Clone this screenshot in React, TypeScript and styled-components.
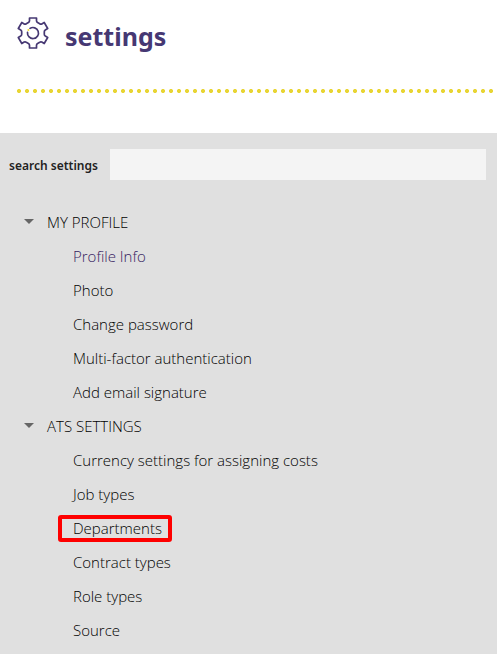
import React from "react";
import styled, { createGlobalStyle } from "styled-components";

const GlobalStyle = createGlobalStyle`
  * { box-sizing: border-box; }
  body { margin: 0; background: #fff; font-family: "Open Sans", sans-serif; color: #222; }
`;

const Page = styled.div`
  display: flex;
  flex-direction: column;
  min-height: 100vh;
`;

const Header = styled.header`
  padding: 16px 0 40px 17px;
`;

const TitleRow = styled.div`
  display: flex;
  align-items: center;
  gap: 16px;
  height: 40px;
`;

const Gear = styled.svg`
  display: block;
  width: 32px;
  height: 34px;
  margin-bottom: 6px;
  flex: none;
`;

const Title = styled.h1`
  margin: 0;
  color: #463873;
  font: 700 25px/40px "Noto Sans", sans-serif;
`;

const DottedRule = styled.div`
  height: 4px;
  margin-top: 33px;
  background: radial-gradient(circle at 2px 2px, #e8d534 1.6px, transparent 2.4px) 0 0 / 8px 4px repeat-x;
`;

const Panel = styled.main`
  flex: 1;
  padding: 16px 11px 0 9px;
  background: #e0e0e0;
`;

const SearchRow = styled.div`
  display: flex;
  align-items: center;
  gap: 12px;
`;

const SearchLabel = styled.label`
  flex: none;
  padding-top: 2px;
  font: 600 12px/16px "Noto Sans", sans-serif;
`;

const SearchInput = styled.input`
  flex: 1;
  min-width: 0;
  height: 31px;
  padding: 0 8px;
  border: 0;
  border-radius: 0;
  background: #f4f4f4;
  font: 14px "Open Sans", sans-serif;
`;

const Menu = styled.nav`
  padding: 25px 0 0 15px;
`;

const GroupButton = styled.button`
  display: flex;
  align-items: center;
  gap: 12px;
  height: 34px;
  padding: 0;
  border: 0;
  background: none;
  color: #000;
  font: 300 15px/34px "Open Sans", sans-serif;
  cursor: pointer;
`;

const Arrow = styled.svg`
  width: 11px;
  height: 6px;
  fill: #666;
`;

const Items = styled.ul`
  margin: 0;
  padding: 0 0 0 34px;
  list-style: none;
`;

const Item = styled.li`
  display: flex;
  align-items: center;
  height: 34px;
`;

const ItemLink = styled.a<{ $current?: boolean; $marked?: boolean }>`
  padding: 0 6px 1px 11px;
  border: 4px solid ${(p) => (p.$marked ? "#fe0000" : "transparent")};
  border-radius: 3px;
  color: ${(p) => (p.$current ? "#35225f" : "#000")};
  font-size: 15px;
  font-weight: 300;
  line-height: 18px;
  text-decoration: none;
`;

type Entry = { label: string; current?: boolean; marked?: boolean };

const groups: { title: string; items: Entry[] }[] = [
  {
    title: "MY PROFILE",
    items: [
      { label: "Profile Info", current: true },
      { label: "Photo" },
      { label: "Change password" },
      { label: "Multi-factor authentication" },
      { label: "Add email signature" },
    ],
  },
  {
    title: "ATS SETTINGS",
    items: [
      { label: "Currency settings for assigning costs" },
      { label: "Job types" },
      { label: "Departments", marked: true },
      { label: "Contract types" },
      { label: "Role types" },
      { label: "Source" },
    ],
  },
];

export default function App() {
  return (
    <Page>
      <GlobalStyle />
      <Header>
        <TitleRow>
          <Gear viewBox="-16 -17 32 34" fill="none" stroke="#463873" strokeWidth="1.7" strokeLinejoin="round" aria-hidden="true">
            <path d="M-3.5-15H3.5V-12.2Q3.5-11 4.6-10.4L6.7-9.2Q7.8-8.5 8.8-9.1L11.2-10.5L14.7-4.5L12.3-3.1Q11.3-2.5 11.3-1.3V1.3Q11.3 2.5 12.3 3.1L14.7 4.5L11.2 10.5L8.8 9.1Q7.8 8.5 6.7 9.2L4.6 10.4Q3.5 11 3.5 12.2V15H-3.5V12.2Q-3.5 11-4.6 10.4L-6.7 9.2Q-7.8 8.5-8.8 9.1L-11.2 10.5L-14.7 4.5L-12.3 3.1Q-11.3 2.5-11.3 1.3V-1.3Q-11.3-2.5-12.3-3.1L-14.7-4.5L-11.2-10.5L-8.8-9.1Q-7.8-8.5-6.7-9.2L-4.6-10.4Q-3.5-11-3.5-12.2Z" />
            <path d="M-3-4.6A5.5 5.5 0 1 1-5.5-.6" strokeLinecap="round" />
            <circle cx="-4.6" cy="-2.9" r="1" fill="#f2dc2a" stroke="none" />
          </Gear>
          <Title>settings</Title>
        </TitleRow>
        <DottedRule />
      </Header>
      <Panel>
        <SearchRow>
          <SearchLabel htmlFor="search">search settings</SearchLabel>
          <SearchInput id="search" type="text" />
        </SearchRow>
        <Menu>
          {groups.map((group) => (
            <section key={group.title}>
              <GroupButton type="button" aria-expanded="true">
                <Arrow viewBox="0 0 11 6" aria-hidden="true">
                  <path d="M0 0H10L5 5Z" />
                </Arrow>
                {group.title}
              </GroupButton>
              <Items>
                {group.items.map((item) => (
                  <Item key={item.label}>
                    <ItemLink href="#" $current={item.current} $marked={item.marked}>
                      {item.label}
                    </ItemLink>
                  </Item>
                ))}
              </Items>
            </section>
          ))}
        </Menu>
      </Panel>
    </Page>
  );
}
